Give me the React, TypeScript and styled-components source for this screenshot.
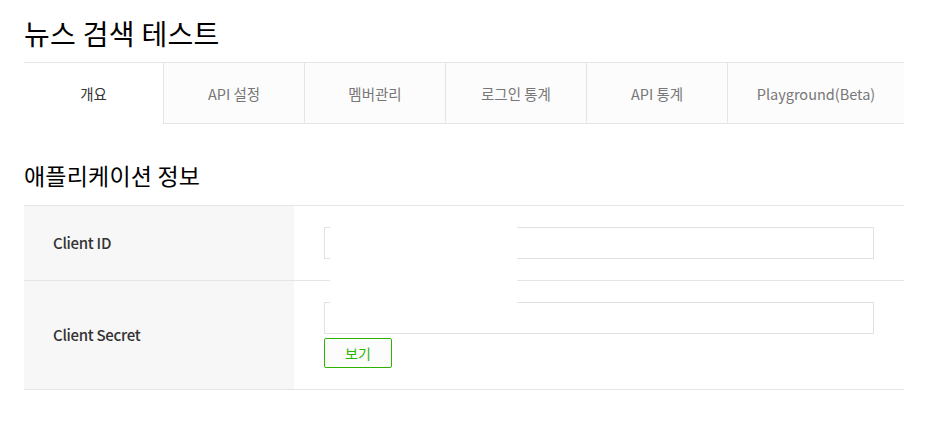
import React from "react";
import styled, { createGlobalStyle } from "styled-components";

const GlobalStyle = createGlobalStyle`
  body {
    margin: 0;
    background: #fff;
    font-family: "Noto Sans CJK KR", "Noto Sans", sans-serif;
    color: #222;
  }
`;

const tabs = ["개요", "API 설정", "멤버관리", "로그인 통계", "API 통계", "Playground(Beta)"];

const rows = [
  { label: "Client ID", showButton: false },
  { label: "Client Secret", showButton: true },
];

export default function App() {
  return (
    <Page>
      <GlobalStyle />
      <Title>뉴스 검색 테스트</Title>
      <TabList>
        {tabs.map((t, i) => (
          <Tab key={t} active={i === 0}>
            {t}
          </Tab>
        ))}
      </TabList>
      <SectionTitle>애플리케이션 정보</SectionTitle>
      <Table>
        {rows.map((r) => (
          <Row key={r.label}>
            <Label>{r.label}</Label>
            <Value>
              <Input readOnly />
              {r.showButton && <ShowButton type="button">보기</ShowButton>}
            </Value>
          </Row>
        ))}
        <Mask />
      </Table>
    </Page>
  );
}

const Page = styled.div`
  width: 880px;
  padding: 0 32px 0 24px;
`;

const Title = styled.h1`
  margin: 0;
  padding-top: 13px;
  font-size: 28px;
  line-height: 40px;
  font-weight: 400;
  color: #000;
  letter-spacing: 0.3px;
`;

const TabList = styled.ul`
  display: grid;
  grid-template-columns: 139px repeat(4, 141px) 1fr;
  margin: 9px 0 0;
  padding: 0;
  list-style: none;
  border-top: 1px solid #e5e5e5;
`;

const Tab = styled.li<{ active?: boolean }>`
  height: 60px;
  display: flex;
  align-items: center;
  justify-content: center;
  font-size: 14.5px;
  color: ${(p) => (p.active ? "#333" : "#777")};
  background: ${(p) => (p.active ? "#fff" : "#fcfcfc")};
  border-bottom: 1px solid ${(p) => (p.active ? "#fff" : "#e5e5e5")};
  border-left: ${(p) => (p.active ? "none" : "1px solid #e5e5e5")};
`;

const SectionTitle = styled.h2`
  margin: 34px 0 13px;
  font-size: 23px;
  line-height: 34px;
  font-weight: 400;
  color: #000;
  letter-spacing: 0.2px;
`;

const Table = styled.div`
  position: relative;
  border-top: 1px solid #e5e5e5;
`;

const Row = styled.div`
  display: flex;
  border-bottom: 1px solid #e5e5e5;
`;

const Label = styled.div`
  width: 270px;
  flex-shrink: 0;
  padding: 0 0 2px 29px;
  box-sizing: border-box;
  display: flex;
  align-items: center;
  background: #f7f7f7;
  font-size: 15px;
  font-weight: 500;
  color: #333;
  letter-spacing: -0.3px;
`;

const Value = styled.div`
  flex: 1;
  padding: 21px 30px;
  display: flex;
  flex-direction: column;
  align-items: flex-start;
`;

const Input = styled.input`
  width: 100%;
  height: 32px;
  box-sizing: border-box;
  border: 1px solid #e1e1e1;
  background: #fff;
  outline: none;
  margin: 0;
`;

const ShowButton = styled.button`
  margin-top: 4px;
  width: 68px;
  height: 30px;
  border: 1px solid #2db400;
  border-radius: 2px;
  background: #fcfcfc;
  color: #2db400;
  font-family: "Noto Sans CJK KR", sans-serif;
  font-size: 14px;
  padding: 0;
`;

const Mask = styled.div`
  position: absolute;
  left: 306px;
  top: 20px;
  width: 187px;
  height: 78px;
  background: #fff;
`;
